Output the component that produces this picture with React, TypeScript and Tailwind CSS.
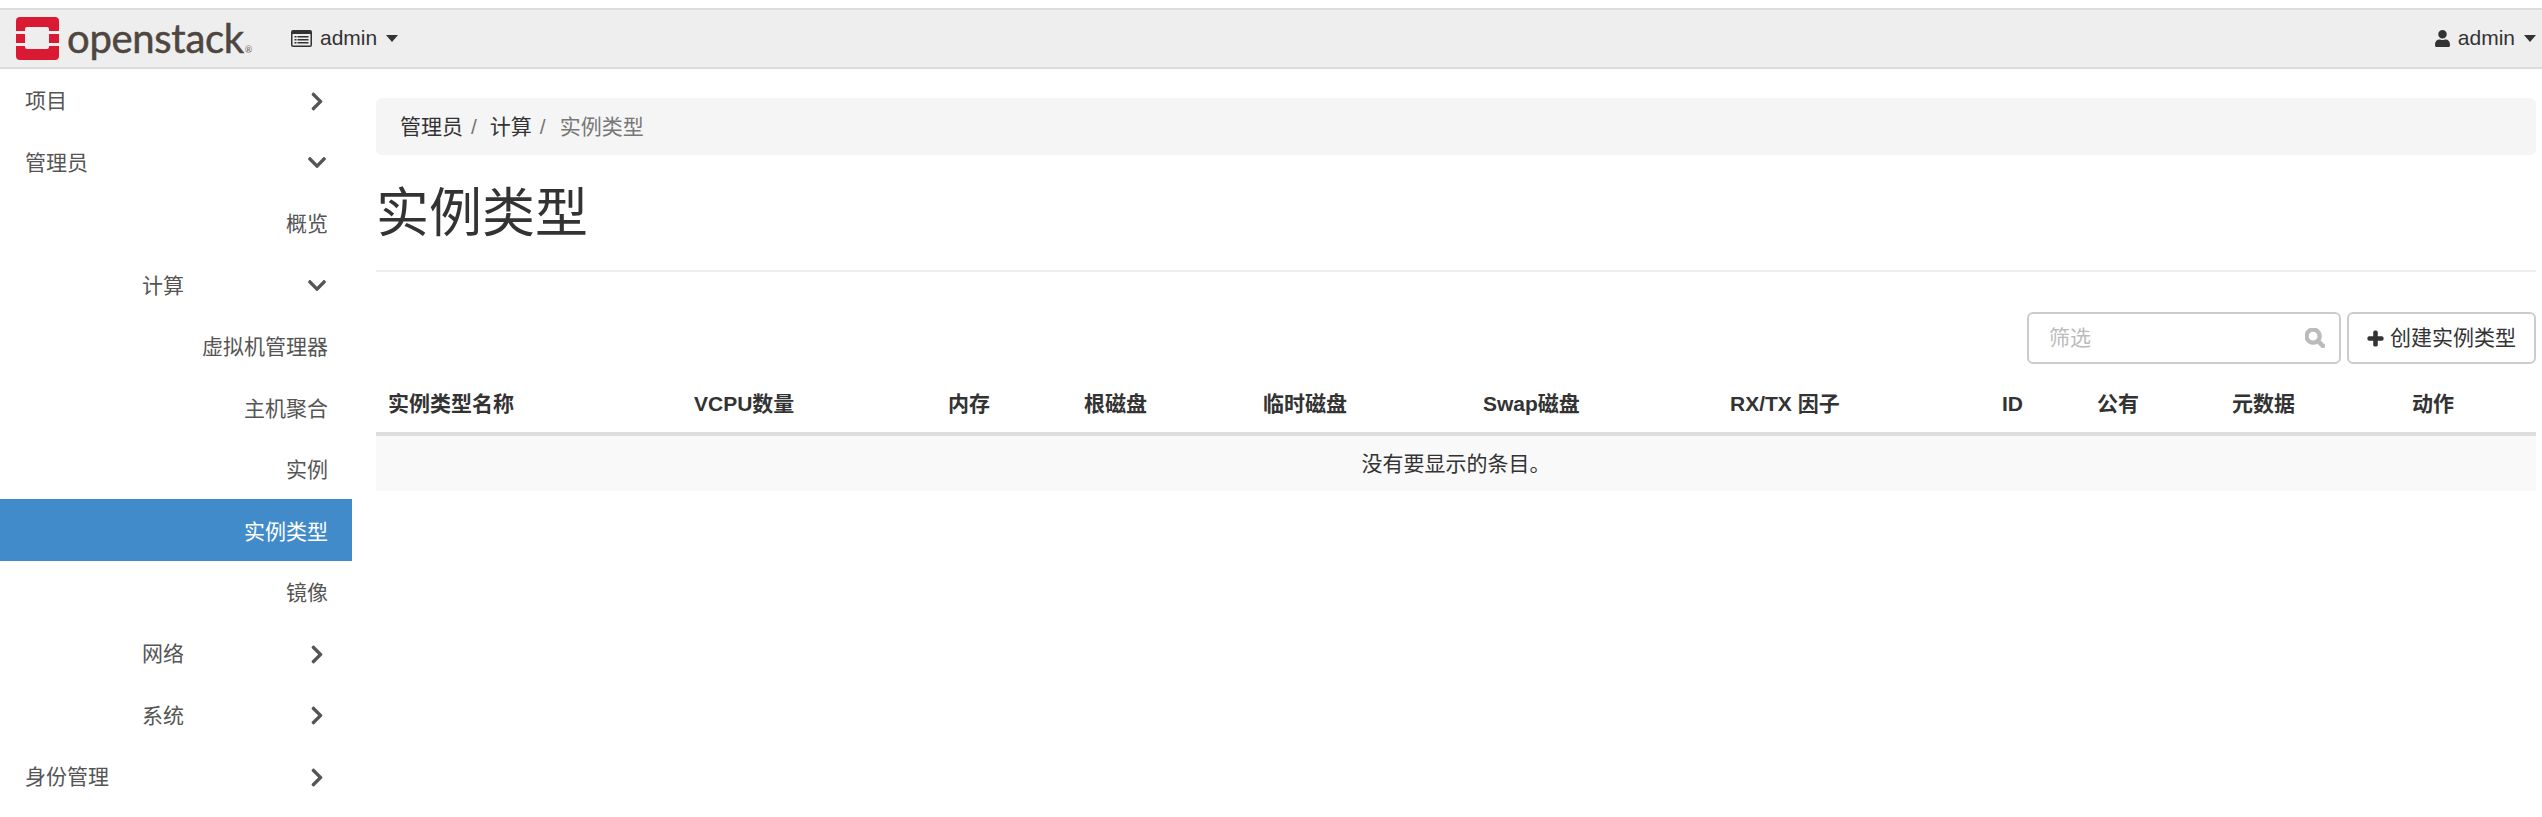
import { FaChevronDown, FaChevronRight, FaPlus, FaSearch, FaUser } from "react-icons/fa";

const font = "font-['Liberation_Sans','Noto_Sans_CJK_SC',sans-serif]";

const columns = [
  { label: "实例类型名称", width: "w-[306px]" },
  { label: "VCPU数量", width: "w-[254px]" },
  { label: "内存", width: "w-[136px]" },
  { label: "根磁盘", width: "w-[179px]" },
  { label: "临时磁盘", width: "w-[220px]" },
  { label: "Swap磁盘", width: "w-[247px]" },
  { label: "RX/TX 因子", width: "w-[272px]" },
  { label: "ID", width: "w-[95px]" },
  { label: "公有", width: "w-[135px]" },
  { label: "元数据", width: "w-[180px]" },
  { label: "动作", width: "w-[136px]" },
];

function Caret() {
  return <span className="ml-[9px] h-0 w-0 border-x-[6px] border-t-[7px] border-x-transparent border-t-[#333]" />;
}

function Logo() {
  return (
    <div className="flex w-[275px] items-center">
      <svg width="43" height="43" viewBox="0 0 43 43">
        <path
          fill="#da1a32"
          d="M4 0h35a4 4 0 0 1 4 4v10H33v-2a2 2 0 0 0-2-2H11a2 2 0 0 0-2 2v2H0V4a4 4 0 0 1 4-4zM0 17h9v9H0zM33 17h10v9H33zM0 29h9v1a2 2 0 0 0 2 2h20a2 2 0 0 0 2-2v-1h10v10a4 4 0 0 1-4 4H4a4 4 0 0 1-4-4z"
        />
      </svg>
      <span className="ml-[8px] flex items-baseline font-['Lato',sans-serif] text-[40px] leading-none tracking-[-0.3px] text-[#4e4640] [-webkit-text-stroke:0.5px_#4e4640]">
        openstack
        <span className="ml-px text-[9px] text-[#6b625c] [-webkit-text-stroke:0]">®</span>
      </span>
    </div>
  );
}

function NavCard() {
  return (
    <svg width="21" height="17" viewBox="0 0 21 17">
      <rect width="21" height="17" rx="2" fill="#333" />
      <rect x="1.5" y="4" width="18" height="11.5" fill="#eee" />
      <path fill="#333" d="M3.5 6h2v1.5h-2zM6.5 6h11v1.5h-11zM3.5 9h2v1.5h-2zM6.5 9h11v1.5h-11zM3.5 12h2v1.5h-2zM6.5 12h11v1.5h-11z" />
    </svg>
  );
}

function Navbar() {
  return (
    <header className="mt-2 flex h-[61px] items-center justify-between border-y-2 border-[#dcdcdc] bg-[#eeeeee] pb-px pl-4 pr-[6px] text-[21px] text-[#333]">
      <div className="flex items-center">
        <Logo />
        <NavCard />
        <span className="ml-[8px]">admin</span>
        <Caret />
      </div>
      <div className="flex items-center">
        <FaUser className="size-[17px]" />
        <span className="ml-[7px]">admin</span>
        <Caret />
      </div>
    </header>
  );
}

function SideItem({ label, pad, open, more, active }: { label: string; pad?: boolean; open?: boolean; more?: boolean; active?: boolean }) {
  return (
    <div className={`flex h-[61.45px] items-center pl-[25px] pr-[24px] pt-[3px] ${active ? "bg-[#428bca] text-white" : "text-[#555]"}`}>
      {more ? (
        <>
          <span className={pad ? "ml-[117px]" : ""}>{label}</span>
          <span className="ml-auto mr-px flex w-[20px] justify-center text-[#555]">
            {open ? <FaChevronDown size={21} /> : <FaChevronRight size={21} />}
          </span>
        </>
      ) : (
        <span className="ml-auto">{label}</span>
      )}
    </div>
  );
}

function Sidebar() {
  return (
    <nav className="w-[352px] shrink-0 text-[21px]">
      <SideItem label="项目" more />
      <SideItem label="管理员" more open />
      <SideItem label="概览" />
      <SideItem label="计算" pad more open />
      <SideItem label="虚拟机管理器" />
      <SideItem label="主机聚合" />
      <SideItem label="实例" />
      <SideItem label="实例类型" active />
      <SideItem label="镜像" />
      <SideItem label="网络" pad more />
      <SideItem label="系统" pad more />
      <SideItem label="身份管理" more />
    </nav>
  );
}

function Main() {
  return (
    <main className="ml-[24px] mr-[6px] flex-1 pt-[29px] text-[21px] text-[#333]">
      <div className="flex h-[57px] items-center rounded-[6px] bg-[#f5f5f5] px-[24px]">
        <span>管理员</span>
        <span className="ml-[8px] text-[#777]">/</span>
        <span className="ml-[13px]">计算</span>
        <span className="ml-[8px] text-[#777]">/</span>
        <span className="ml-[14px] text-[#777]">实例类型</span>
      </div>
      <h1 className="mt-[23px] text-[53px] leading-[72px] font-normal">实例类型</h1>
      <hr className="mt-[20px] border-t-2 border-[#eeeeee]" />
      <div className="mt-[40px] flex justify-end gap-[6px]">
        <div className="relative flex h-[52px] w-[314px] items-center rounded-[6px] border-2 border-[#ccc] bg-white pl-[20px]">
          <input placeholder="筛选" className="w-full bg-transparent outline-none placeholder:text-[#bbb]" />
          <FaSearch stroke="currentColor" strokeWidth={30} className="absolute right-[14px] size-[20px] text-[#bbb]" />
        </div>
        <button className="flex h-[52px] items-center rounded-[6px] border-2 border-[#ccc] bg-white px-[18px]">
          <FaPlus stroke="currentColor" strokeWidth={40} className="mr-[6px] size-[17px]" />
          创建实例类型
        </button>
      </div>
      <table className="mt-[13px] w-full table-fixed border-collapse">
        <thead>
          <tr className="h-[57px] border-b-4 border-[#ddd]">
            {columns.map((c) => (
              <th key={c.label} className={`${c.width} px-[12px] pb-[2px] text-left font-bold`}>
                {c.label}
              </th>
            ))}
          </tr>
        </thead>
        <tbody>
          <tr className="h-[57px] bg-[#f9f9f9]">
            <td colSpan={11} className="text-center">
              没有要显示的条目。
            </td>
          </tr>
        </tbody>
      </table>
    </main>
  );
}

export default function App() {
  return (
    <div className={`${font} h-[817px] overflow-hidden bg-white`}>
      <Navbar />
      <div className="flex">
        <Sidebar />
        <Main />
      </div>
    </div>
  );
}
